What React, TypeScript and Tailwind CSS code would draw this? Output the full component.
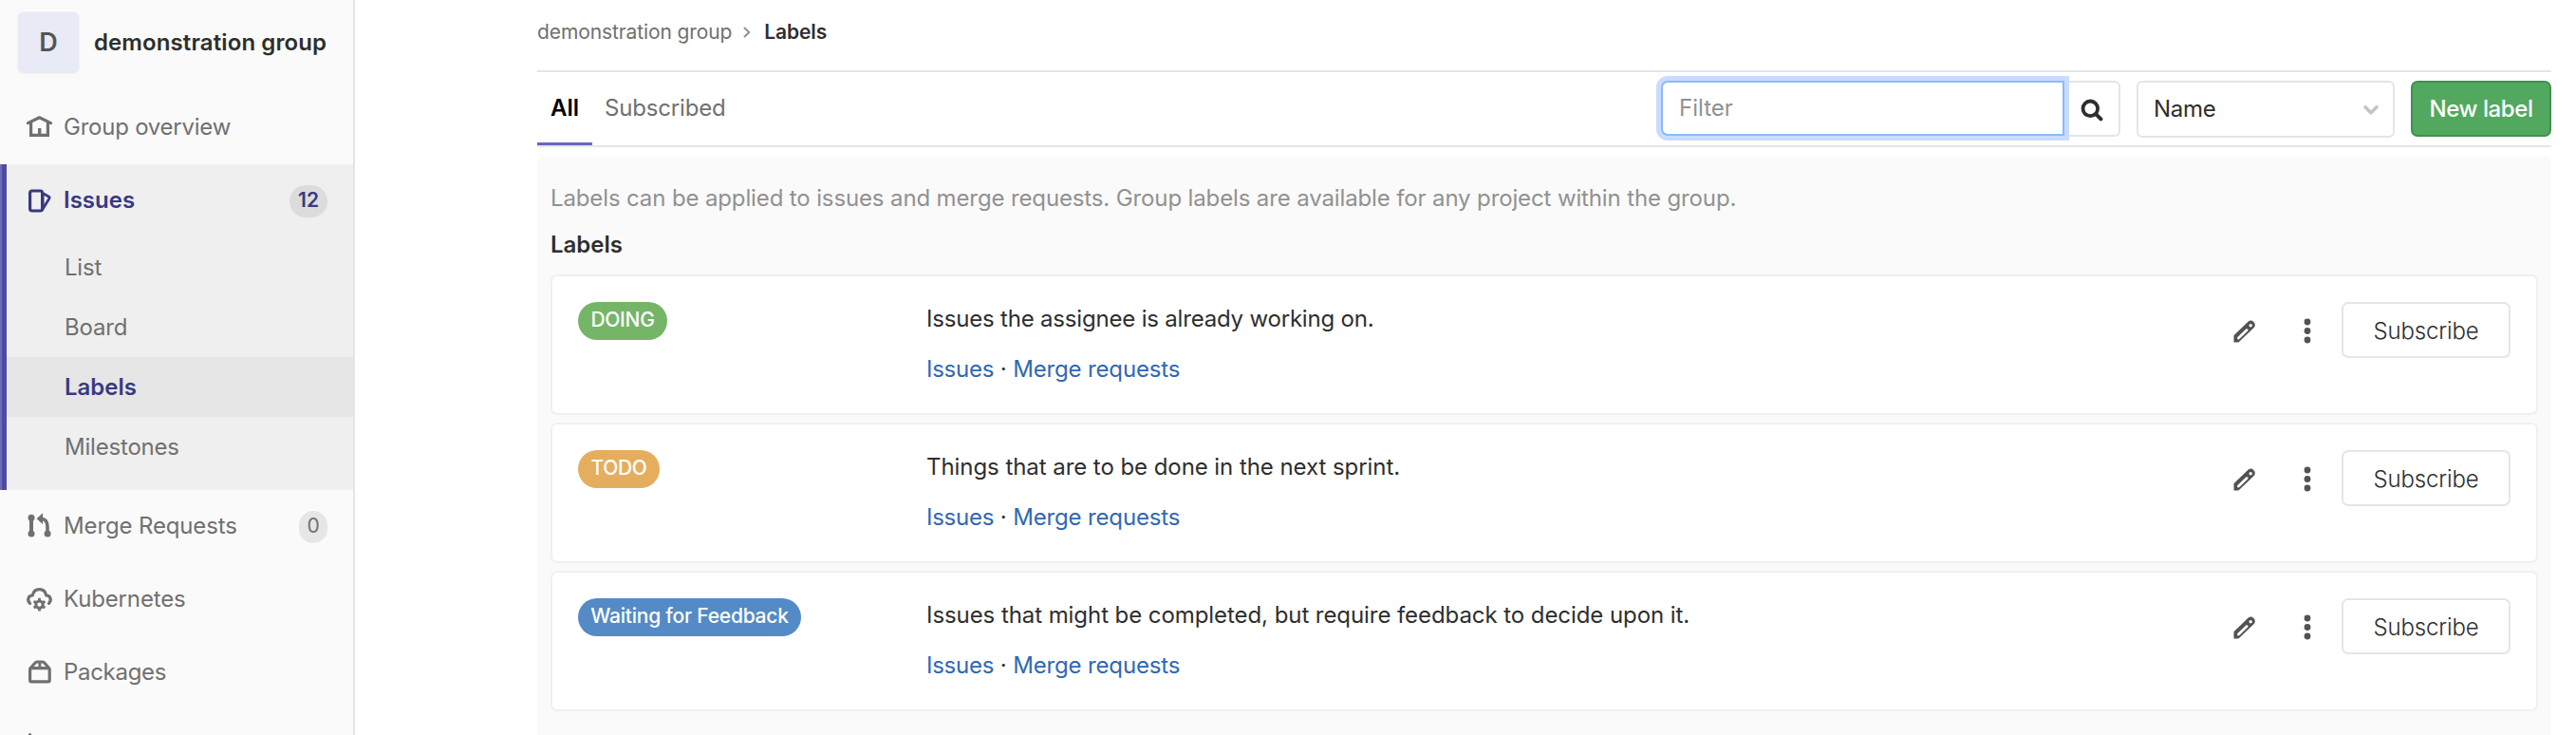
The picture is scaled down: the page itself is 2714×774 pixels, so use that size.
import type { ReactNode } from "react";

function Icon({ children }: { children: ReactNode }) {
  return (
    <svg width="28" height="27" viewBox="0 0 28 27" fill="none" className="shrink-0 overflow-visible">
      {children}
    </svg>
  );
}

const HomeIcon = () => (
  <Icon>
    <path d="M2.400 8.600 14.500 2.800 26.600 8.600" stroke="currentColor" strokeWidth="3.200" strokeLinecap="round" strokeLinejoin="round" />
    <path d="M5.600 8V21.400H23.400V8" stroke="currentColor" strokeWidth="3.200" />
    <path d="M13 14h3.400v7H13z" fill="currentColor" />
  </Icon>
);

const IssuesIcon = () => (
  <Icon>
    <rect x="4.600" y="3" width="13" height="21" rx="2.200" stroke="currentColor" strokeWidth="3.200" />
    <path d="M18 5.400 24.600 9.200Q25.600 9.900 25 10.900L18 22.200Z" stroke="currentColor" strokeWidth="2.800" strokeLinejoin="round" />
  </Icon>
);

const MergeIcon = () => (
  <Icon>
    <path d="M6 4v17" stroke="currentColor" strokeWidth="4" />
    <circle cx="6" cy="4.200" r="3.500" fill="currentColor" />
    <circle cx="6" cy="21" r="3.500" fill="currentColor" />
    <circle cx="23.100" cy="21" r="3.500" fill="currentColor" />
    <path d="M16 5.200c4 .2 7 2.800 7 8.200V21" stroke="currentColor" strokeWidth="3.600" />
    <path d="M11.600 5.200 18 -.7V11Z" fill="currentColor" />
  </Icon>
);

const KubernetesIcon = () => (
  <Icon>
    <path
      d="M4.600 17.300C1 13.800 2.800 9.300 7.300 8.900 8.300 4.500 11 2.700 14.500 2.700S20.700 4.500 21.700 8.900C26.200 9.300 27.800 13.800 24.500 17.300"
      stroke="currentColor"
      strokeWidth="3.200"
      strokeLinecap="round"
      strokeLinejoin="round"
    />
    <circle cx="14.500" cy="18.600" r="3.700" stroke="currentColor" strokeWidth="3" />
    <path
      d="M14.500 11.800v2.800M14.500 22.600v2.800M8.600 15.200l2.400 1.400M18 20.600l2.400 1.400M8.600 22l2.400-1.400M18 16.600l2.400-1.400"
      stroke="currentColor"
      strokeWidth="2.800"
    />
  </Icon>
);

const PackageIcon = () => (
  <Icon>
    <rect x="4.600" y="8.700" width="20.600" height="14.200" rx="1.600" stroke="currentColor" strokeWidth="3.200" />
    <path d="M4.800 9 10 3Q10.800 2 12 2H17.800Q19 2 19.800 3L25 9" stroke="currentColor" strokeWidth="3.200" strokeLinejoin="round" />
    <path d="M14.900 2v6.500" stroke="currentColor" strokeWidth="3" />
  </Icon>
);

const ChartIcon = () => (
  <Icon>
    <path d="M4.500 1.600V23H26" stroke="currentColor" strokeWidth="3.200" strokeLinecap="round" />
  </Icon>
);

function NavRow({ icon, label, spacing, badge }: { icon: ReactNode; label?: string; spacing?: string; badge?: string }) {
  return (
    <div className="flex h-[77px] shrink-0 items-center pr-[27px] pl-[27px] text-[#707070]">
      {icon}
      {label && <span className={`ml-[12px] flex-1 pb-[2px] ${spacing}`}>{label}</span>}
      {badge && (
        <span className="flex h-[34px] w-[30px] items-center justify-center rounded-full bg-[#e6e6e6] pb-px text-[21px]">
          {badge}
        </span>
      )}
    </div>
  );
}

function SubItem({ label, active }: { label: string; active?: boolean }) {
  return (
    <div
      className={
        active
          ? "flex h-[63px] items-center bg-[#e6e6e6] pl-[61px] font-semibold text-[#393982]"
          : "flex h-[63px] items-center pl-[61px] tracking-[-0.2px] text-[#707070]"
      }
    >
      {label}
    </div>
  );
}

function Sidebar() {
  return (
    <aside className="flex h-full w-[374px] shrink-0 flex-col overflow-hidden border-r-2 border-[#e5e5e5] bg-[#fafafa]">
      <div className="flex h-[96px] shrink-0 items-start pt-[12px] pl-[18px]">
        <div className="flex size-[66px] items-center justify-center rounded-[7px] border border-[#f2f2f2] bg-[#e8eaf6] text-[27px] font-semibold text-[#555]">
          D
        </div>
        <div className="ml-[15px] flex h-[65px] items-center font-semibold tracking-[0.1px] text-[#2e2e2e]">demonstration group</div>
      </div>
      <NavRow icon={<HomeIcon />} label="Group overview" spacing="tracking-[-0.24px]" />
      <div className="flex h-[343px] shrink-0 bg-[#efefef]">
        <div className="w-[7px] border-l-2 border-[#6c6cb2] bg-[#4b4ba3]" />
        <div className="flex flex-1 flex-col">
          <div className="flex h-[77px] items-center pr-[27px] pl-[20px] font-semibold text-[#393982]">
            <IssuesIcon />
            <span className="ml-[12px] flex-1 pb-[2px]">Issues</span>
            <span className="flex h-[34px] w-[40px] items-center justify-center rounded-full bg-[#dcdcdc] pb-px text-[21px]">12</span>
          </div>
          <SubItem label="List" />
          <SubItem label="Board" />
          <SubItem label="Labels" active />
          <SubItem label="Milestones" />
        </div>
      </div>
      <NavRow icon={<MergeIcon />} label="Merge Requests" spacing="tracking-[-0.14px]" badge="0" />
      <NavRow icon={<KubernetesIcon />} label="Kubernetes" spacing="tracking-[-0.15px]" />
      <NavRow icon={<PackageIcon />} label="Packages" spacing="tracking-[-0.3px]" />
      <NavRow icon={<ChartIcon />} />
    </aside>
  );
}

function Toolbar() {
  return (
    <div className="flex h-[81px] shrink-0 border-y-2 border-[#e5e5e5]">
      <div className="flex flex-1">
        <div className="flex w-[58px] items-center justify-center border-b-[3px] border-[#6666c4] pt-px font-semibold text-black">All</div>
        <div className="flex items-center pb-[2px] pl-[13px] tracking-[-0.18px] text-[#707070]">Subscribed</div>
      </div>
      <div className="flex items-start pt-[9px]">
        <div className="relative z-10 flex h-[58px] w-[425px] items-center rounded-l-[7px] border-2 border-[#8bbafa] bg-white pb-px pl-[17px] text-[#919191] shadow-[0_0_0_5px_#c9dcff]">
          Filter
        </div>
        <div className="flex h-[59px] w-[59px] items-center justify-center rounded-r-[6px] border-2 border-l-0 border-[#e5e5e5] pt-px pl-px">
          <svg width="25" height="25" viewBox="0 0 25 25" fill="none" className="text-[#2e2e2e]">
            <circle cx="10.300" cy="11.300" r="7.800" stroke="currentColor" strokeWidth="3.800" />
            <path d="M16.200 17.200 21.400 22.400" stroke="currentColor" strokeWidth="4" strokeLinecap="round" />
          </svg>
        </div>
        <div className="ml-[17px] flex h-[60px] w-[272px] items-center justify-between rounded-[6px] border-2 border-[#e5e5e5] pr-[14px] pb-px pl-[16px] tracking-[-0.3px] text-[#2e2e2e]">
          Name
          <svg width="18" height="12" viewBox="0 0 18 12" fill="none" className="mt-[3px] text-[#c4c4c4]">
            <path d="M3 2.700 9 8.700 15 2.700" stroke="currentColor" strokeWidth="3.600" strokeLinecap="round" strokeLinejoin="round" />
          </svg>
        </div>
        <div className="ml-[17px] flex h-[59px] w-[148px] items-center justify-center rounded-[7px] border-2 border-[#3f9150] bg-[#52a85f] font-medium tracking-[-0.4px] text-white">
          New label
        </div>
      </div>
    </div>
  );
}

const labels = [
  { name: "DOING", pill: "w-[94px] bg-[#75b568] tracking-[-0.3px]", text: "Issues the assignee is already working on.", spacing: "tracking-[-0.19px]" },
  { name: "TODO", pill: "w-[86px] bg-[#e5ae5e] tracking-[-0.35px]", text: "Things that are to be done in the next sprint.", spacing: "tracking-[-0.06px]" },
  { name: "Waiting for Feedback", pill: "w-[235px] bg-[#548bc6] tracking-[-0.22px]", text: "Issues that might be completed, but require feedback to decide upon it.", spacing: "tracking-[-0.07px]" },
];

function LabelCard({ name, pill, text, spacing }: (typeof labels)[number]) {
  return (
    <div className="flex h-[148px] items-start rounded-[7px] border-2 border-[#f0f0f0] bg-white px-[27px] pt-[27px]">
      <div className="w-[367px]">
        <span className={`flex h-[40px] items-center justify-center rounded-full pb-[2px] text-[21px] font-medium text-white ${pill}`}>{name}</span>
      </div>
      <div className="flex flex-1 flex-col gap-[19px] pt-px leading-[34px] text-[#2e2e2e]">
        <div className={spacing}>{text}</div>
        <div className="flex">
          <span className="tracking-[-0.25px] text-[#3068b4]">Issues</span>
          <span className="w-[20px] text-center">·</span>
          <span className="tracking-[-0.15px] text-[#3068b4]">Merge requests</span>
        </div>
      </div>
      <div className="flex h-[59px] items-center">
        <svg width="24" height="24" viewBox="0 0 24 24" fill="none" className="mt-[3px] text-[#525252]">
          <path
            fillRule="evenodd"
            clipRule="evenodd"
            d="M.5 23.500V16.200L15.500 1.800Q18.500-.6 21.300 1.900 24 4.600 22 7.700L6.500 22.600Q5.800 23.500 4.800 23.500ZM4.200 18.200Q3.600 19.300 4.600 20.200 5.600 20.700 6.400 19.900L15.200 11.400Q15.900 10.400 15.200 9.600 14.300 8.800 13.300 9.400ZM18.200 4A1.700 1.700 0 1 0 18.200 7.400 1.700 1.700 0 1 0 18.200 4Z"
            fill="currentColor"
          />
        </svg>
        <svg width="8" height="28" viewBox="0 0 8 28" className="mt-[3px] ml-[50px] text-[#525252]">
          <circle cx="4" cy="4" r="3.400" fill="currentColor" />
          <circle cx="4" cy="13.500" r="3.400" fill="currentColor" />
          <circle cx="4" cy="23" r="3.400" fill="currentColor" />
        </svg>
        <div className="ml-[32px] flex h-[59px] w-[178px] items-center justify-center rounded-[7px] border-2 border-[#e5e5e5] pt-[2px] font-light tracking-[-0.15px] text-[#2e2e2e]">
          Subscribe
        </div>
      </div>
    </div>
  );
}

export default function App() {
  return (
    <div className="flex h-[774px] w-full overflow-hidden bg-white font-['Inter',sans-serif] text-[24px] leading-[32px] whitespace-nowrap">
      <Sidebar />
      <main className="flex flex-1 flex-col pr-[26px] pl-[192px]">
        <div className="flex h-[74px] shrink-0 items-center pb-[7px] text-[21px]">
          <span className="tracking-[-0.11px] text-[#707070]">demonstration group</span>
          <svg width="8" height="12" viewBox="0 0 8 12" fill="none" className="mt-px mr-[14px] ml-[12px] text-[#919191]">
            <path d="M1.500 1.500 6.200 6 1.500 10.500" stroke="currentColor" strokeWidth="2" strokeLinecap="round" strokeLinejoin="round" />
          </svg>
          <span className="font-semibold tracking-[-0.1px] text-[#2e2e2e]">Labels</span>
        </div>
        <Toolbar />
        <section className="mt-[9px] flex flex-1 flex-col rounded-t-[7px] bg-[#fafafa] px-[14px] pt-[29px]">
          <p className="tracking-[-0.13px] text-[#919191]">
            Labels can be applied to issues and merge requests. Group labels are available for any project within the group.
          </p>
          <h3 className="mt-[17px] mb-[15px] font-semibold text-[#2e2e2e]">Labels</h3>
          <div className="flex flex-col gap-[8px]">
            {labels.map((l) => (
              <LabelCard key={l.name} {...l} />
            ))}
          </div>
        </section>
      </main>
    </div>
  );
}
